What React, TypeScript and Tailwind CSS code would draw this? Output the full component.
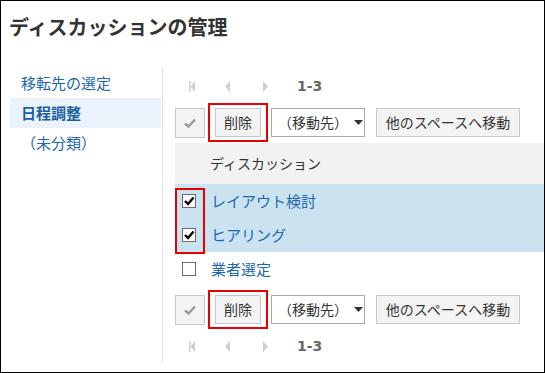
const font = { fontFamily: '"Noto Sans CJK JP", "Noto Sans", sans-serif' };

function PagerIcon({ kind }: { kind: "first" | "prev" | "next" }) {
  if (kind === "first") {
    return (
      <svg width="6" height="11" viewBox="0 0 6 11" className="block">
        <rect x="0" y="0" width="1.6" height="11" fill="#cfcfcf" />
        <path d="M6 0 L1.6 5.5 L6 11 Z" fill="#cfcfcf" />
      </svg>
    );
  }
  if (kind === "prev") {
    return (
      <svg width="5" height="11" viewBox="0 0 5 11" className="block">
        <path d="M5 0 L0 5.5 L5 11 Z" fill="#cfcfcf" />
      </svg>
    );
  }
  return (
    <svg width="5" height="11" viewBox="0 0 5 11" className="block">
      <path d="M0 0 L5 5.5 L0 11 Z" fill="#cfcfcf" />
    </svg>
  );
}

function Pager() {
  return (
    <div className="flex h-[28px] items-center pl-[14px]">
      <div className="w-[36px]">
        <PagerIcon kind="first" />
      </div>
      <div className="w-[38px]">
        <PagerIcon kind="prev" />
      </div>
      <div className="w-[34px]">
        <PagerIcon kind="next" />
      </div>
      <span className="text-[14px] font-bold text-[#666]" style={{ fontFamily: '"DejaVu Sans", sans-serif' }}>
        1-3
      </span>
    </div>
  );
}

function Toolbar() {
  return (
    <div className="flex items-center">
      <button className="flex h-[30px] w-[30px] items-center justify-center border border-[#c9c9c9] bg-[#f3f3f3]">
        <svg width="12" height="10" viewBox="0 0 12 10">
          <path d="M1 5.5 L4.5 8.5 L11 1.5" fill="none" stroke="#9a9a9a" strokeWidth="2.4" />
        </svg>
      </button>
      <div className="ml-[3px] border-2 border-[#e60000] px-[5px] py-[3px]">
        <button className="flex h-[29px] w-[46px] items-center justify-center border border-[#c9c9c9] bg-[#f3f3f3] text-[14px] text-[#333]">
          削除
        </button>
      </div>
      <div className="ml-[3px] flex h-[29px] w-[94px] items-center border border-[#aaa] bg-white pl-[6px] text-[14px] text-[#333]">
        <span>（移動先）</span>
        <svg width="9" height="5" viewBox="0 0 9 5" className="ml-[6px]">
          <path d="M0 0 L9 0 L4.5 5 Z" fill="#333" />
        </svg>
      </div>
      <button className="ml-[11px] flex h-[29px] w-[144px] items-center justify-center border border-[#c9c9c9] bg-[#f3f3f3] text-[14px] text-[#333]">
        他のスペースへ移動
      </button>
    </div>
  );
}

function Checkbox({ checked }: { checked: boolean }) {
  return (
    <svg width="14" height="14" viewBox="0 0 14 14" className="block">
      <rect x="0.5" y="0.5" width="13" height="13" fill="white" stroke="#6b6b6b" />
      {checked && <path d="M3 7 L6 10 L11.5 3.5" fill="none" stroke="#000" strokeWidth="2.4" />}
    </svg>
  );
}

const rows = [
  { title: "レイアウト検討", checked: true },
  { title: "ヒアリング", checked: true },
  { title: "業者選定", checked: false },
];

export default function App() {
  return (
    <div className="h-[373px] w-[545px] overflow-hidden border border-black bg-white" style={font}>
      <h1 className="pl-[8px] pt-[12px] text-[20px] font-bold leading-[28px] text-[#333]">ディスカッションの管理</h1>
      <div className="mt-[27px] flex">
        <div className="h-[294px] w-[162px] border-r border-[#e3e3e3] pl-[9px]">
          <div className="flex h-[30px] w-[151px] items-center pl-[11px] text-[15px] text-[#1d67b1]">移転先の選定</div>
          <div className="flex h-[30px] w-[151px] items-center bg-[#eaf2fb] pl-[11px] text-[15px] font-bold text-[#1a5ea6]">
            日程調整
          </div>
          <div className="flex h-[30px] w-[151px] items-center pl-[11px] text-[15px] text-[#1d67b1]">（未分類）</div>
        </div>
        <div className="flex-1 pl-[12px] pt-[4px]">
          <Pager />
          <div className="mt-[3px]">
            <Toolbar />
          </div>
          <div className="mt-[1px] flex h-[41px] items-center bg-[#f2f2f2] pl-[35px] text-[14px] text-[#333]">
            ディスカッション
          </div>
          <div className="relative">
            {rows.map((r) => (
              <div
                key={r.title}
                className={`flex h-[34px] items-center ${r.checked ? "bg-[#cbe2f0]" : "bg-white"}`}
              >
                <div className="w-[36px] pl-[7px]">
                  <Checkbox checked={r.checked} />
                </div>
                <span className="text-[15px] text-[#1d67b1]">{r.title}</span>
              </div>
            ))}
            <div className="absolute left-0 top-[4px] h-[66px] w-[30px] border-2 border-[#e60000]" />
          </div>
          <div className="mt-[4px]">
            <Toolbar />
          </div>
          <div className="mt-[3px]">
            <Pager />
          </div>
        </div>
      </div>
    </div>
  );
}
